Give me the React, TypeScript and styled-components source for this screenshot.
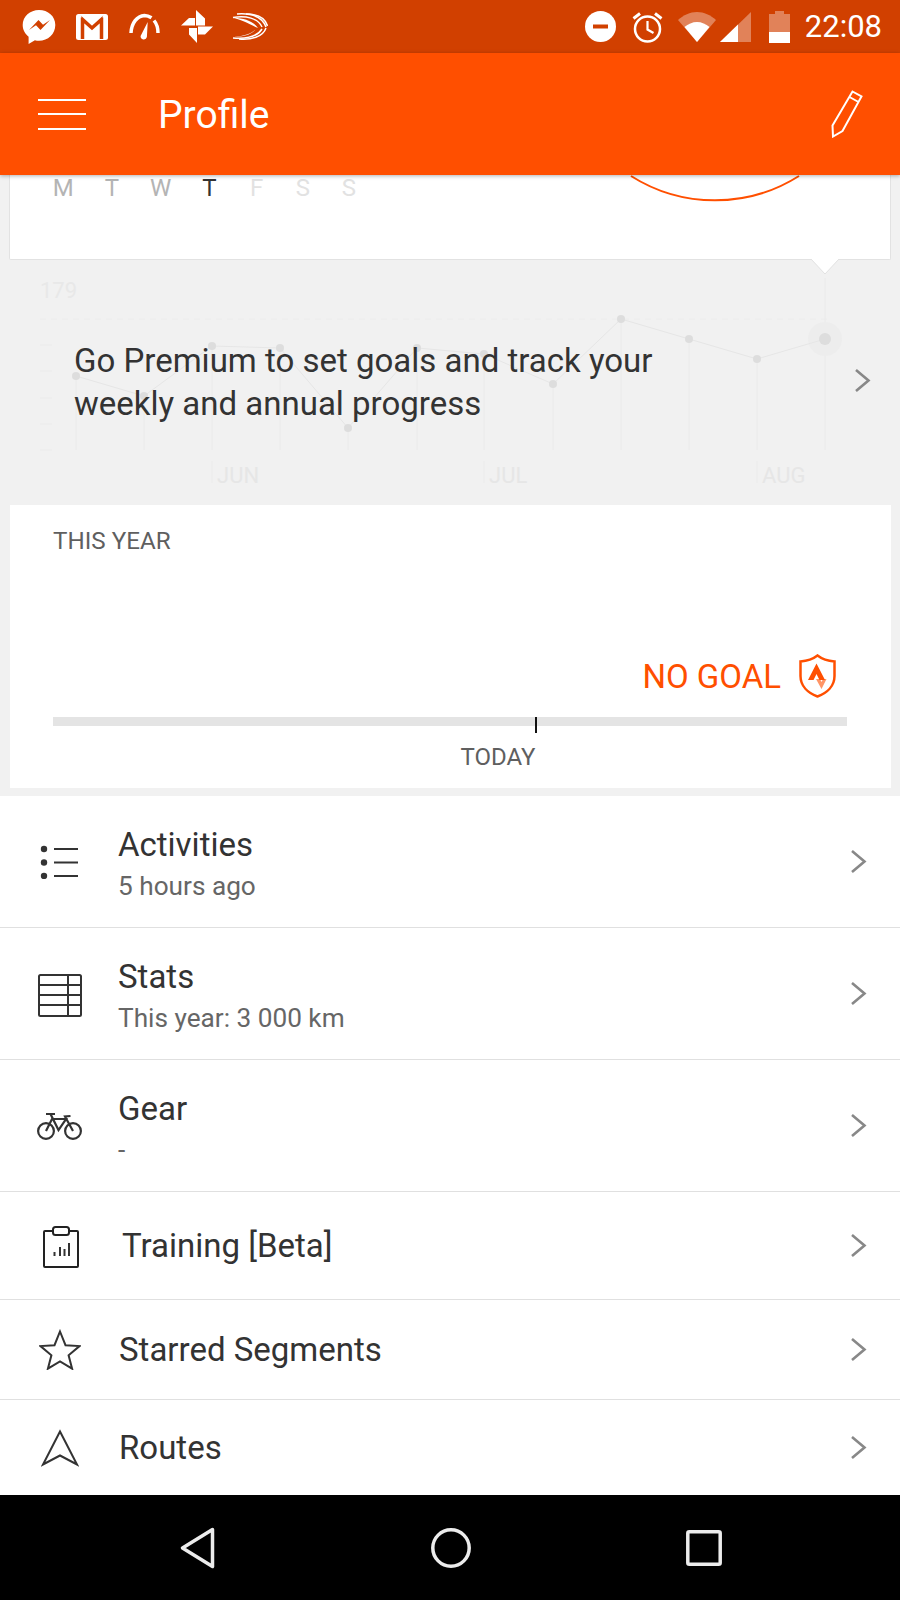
import React from 'react'
import styled, {createGlobalStyle} from 'styled-components'

const STATUS_BG = '#d14000'
const ORANGE = '#ff4f00'
const INK = '#333333'
const NAV_ICON = '#ececec'

const GlobalStyle = createGlobalStyle`
  html, body {
    margin: 0;
    padding: 0;
    background: #000;
  }
  * {
    box-sizing: border-box;
  }
`

const Screen = styled.div`
  width: 900px;
  height: 1600px;
  display: flex;
  flex-direction: column;
  overflow: hidden;
  font-family: Roboto, "Noto Sans", sans-serif;
  background: #f1f1f1;
`

/* status bar */
const StatusBar = styled.div`
  height: 53px;
  flex: none;
  display: flex;
  align-items: center;
  justify-content: space-between;
  padding: 0 18px 0 22px;
  background: ${STATUS_BG};
`
const StatusGroup = styled.div`
  display: flex;
  align-items: center;
`
const StatusIcon = styled.svg<{ $gap?: number }>`
  display: block;
  flex: none;
  margin-right: ${({$gap}) => $gap ?? 0}px;
`
const Clock = styled.span`
  color: #fff;
  font-size: 31px;
  line-height: 53px;
  margin-left: 15px;
`

/* toolbar */
const Toolbar = styled.header`
  height: 122px;
  flex: none;
  position: relative;
  z-index: 2;
  display: flex;
  align-items: center;
  padding: 0 37px 0 38px;
  background: ${ORANGE};
  box-shadow: 0 1px 4px rgba(0, 0, 0, 0.3);
`
const Burger = styled.div`
  width: 48px;
  height: 31px;
  display: flex;
  flex-direction: column;
  justify-content: space-between;
  span {
    display: block;
    height: 2px;
    background: #fff;
  }
`
const Title = styled.h1`
  margin: 2px 0 0 72px;
  flex: 1;
  color: #fff;
  font-size: 39px;
  font-weight: 400;
`

/* week card */
const WeekCard = styled.section`
  height: 85px;
  flex: none;
  position: relative;
  margin: 0 9px 0 9px;
  padding: 0 0 0 29px;
  display: flex;
  background: #fff;
  border: 1px solid #e2e2e2;
  border-top: 0;
  border-radius: 0 0 2px 2px;
`
const Day = styled.span<{ $tone: string }>`
  width: 48.7px;
  line-height: 27px;
  text-align: center;
  font-size: 24px;
  color: ${({$tone}) => $tone};
  &:nth-child(n + 5) {
    width: 46px;
  }
`
const ProgressArc = styled.svg`
  position: absolute;
  left: 620px;
  top: 0;
`
const Notch = styled.svg`
  position: absolute;
  left: 798px;
  bottom: -16px;
  z-index: 1;
`

/* premium teaser over the ghost chart */
const Promo = styled.section`
  height: 245px;
  flex: none;
  position: relative;
  display: flex;
  align-items: center;
  justify-content: space-between;
  padding: 0 29px 5px 74px;
`
const GhostChart = styled.svg`
  position: absolute;
  left: 0;
  top: 0;
`
const PromoText = styled.p`
  position: relative;
  margin: 4px 0 0;
  font-size: 33px;
  line-height: 43px;
  color: ${INK};
`
const Chevron = styled.svg`
  display: block;
  flex: none;
  position: relative;
`

/* this year card */
const YearCard = styled.section`
  height: 283px;
  flex: none;
  margin: 0 9px 0 10px;
  padding: 22px 44px 0 43px;
  display: flex;
  flex-direction: column;
  background: #fff;
`
const YearLabel = styled.div`
  font-size: 24.2px;
  line-height: 28px;
  color: #5f5f5f;
`
const GoalRow = styled.div`
  margin-top: 99px;
  height: 44px;
  display: flex;
  align-items: center;
  justify-content: flex-end;
  padding-right: 11px;
  gap: 18px;
  color: ${ORANGE};
  font-size: 33px;
`
const Track = styled.div`
  position: relative;
  height: 9px;
  margin-top: 19px;
  background: #e4e4e4;
`
const TodayTick = styled.div`
  position: absolute;
  top: 0;
  width: 2px;
  height: 16px;
  background: #111;
`
const TodayLabel = styled.div`
  margin-top: 16px;
  padding-left: 1px;
  margin-left: 1px;
  text-align: right;
  font-size: 24px;
  line-height: 30px;
  color: #5f5f5f;
`

/* list */
const List = styled.nav`
  flex: 1;
  margin-top: 8px;
  background: #fff;
`
const Row = styled.div<{ $height: number }>`
  height: ${({$height}) => $height}px;
  display: flex;
  align-items: center;
  padding-right: 33px;
  border-bottom: 1px solid #e0e0e0;
  &:last-child {
    border-bottom: 0;
  }
`
const IconCell = styled.div<{ $dx?: number, $dy?: number }>`
  width: 119px;
  flex: none;
  display: flex;
  justify-content: center;
  padding-left: ${({$dx}) => $dx ?? 0}px;
  padding-top: ${({$dy}) => $dy ?? 0}px;
  svg {
    display: block;
  }
`
const RowBody = styled.div<{ $indent?: number, $lift?: number }>`
  flex: 1;
  padding-left: ${({$indent}) => $indent ?? 0}px;
  padding-top: ${({$lift}) => $lift ?? 0}px;
`
const RowTitle = styled.div`
  font-size: 33px;
  line-height: 40px;
  margin-left: -1px;
  color: ${INK};
`
const RowSub = styled.div`
  margin-top: 2px;
  margin-left: -1px;
  font-size: 26.2px;
  line-height: 38px;
  color: #666;
`

/* android nav */
const NavBar = styled.footer`
  height: 105px;
  flex: none;
  display: flex;
  align-items: center;
  background: #000;
  padding: 0 178px 0 180px;
  justify-content: space-between;
`

const chartDots = [
  [76, 376], [144, 396], [212, 346], [280, 348], [348, 428], [417, 348],
  [484, 354], [553, 384], [621, 319], [689, 339], [757, 359], [825, 339],
]
const chartGrid = [345, 371, 398, 424, 450]
const chartMonths = [
  {label: 'JUN', x: 212},
  {label: 'JUL', x: 484},
  {label: 'AUG', x: 757},
]
const days = [
  {d: 'M', tone: '#b4b4b4'},
  {d: 'T', tone: '#b4b4b4'},
  {d: 'W', tone: '#b4b4b4'},
  {d: 'T', tone: '#333'},
  {d: 'F', tone: '#e2e2e2'},
  {d: 'S', tone: '#e2e2e2'},
  {d: 'S', tone: '#e2e2e2'},
]

const ListChevron = () => (
  <Chevron width="17" height="25" viewBox="0 0 17 25">
    <path d="M2 2l12.5 10.5L2 23" fill="none" stroke="#888" strokeWidth="2.6"/>
  </Chevron>
)

const ActivitiesIcon = () => (
  <svg width="40" height="34" viewBox="0 0 40 34">
    <g fill="#333">
      <circle cx="4" cy="4" r="3.2"/>
      <circle cx="4" cy="17.5" r="3.2"/>
      <circle cx="4" cy="31" r="3.2"/>
    </g>
    <path d="M14 4h24M14 17.5h24M14 31h24" stroke="#333" strokeWidth="2"/>
  </svg>
)
const StatsIcon = () => (
  <svg width="44" height="44" viewBox="0 0 44 44">
    <rect x="1" y="1" width="42" height="41" rx="1.5" fill="none" stroke="#333" strokeWidth="2"/>
    <path d="M1 11h42M1 21h42M1 31h42M30 1v41" stroke="#333" strokeWidth="2"/>
  </svg>
)
const GearIcon = () => (
  <svg width="45" height="28" viewBox="0 0 45 28">
    <g fill="none" stroke="#333" strokeWidth="2.2">
      <circle cx="9" cy="19" r="7.900"/>
      <circle cx="36" cy="19" r="7.900"/>
      <path d="M9 19L15 7h14L21.500 18 13.500 2M9 2h9M36 19L28 4.500l5.500-.5"/>
    </g>
  </svg>
)
const TrainingIcon = () => (
  <svg width="36" height="42" viewBox="0 0 36 42">
    <path d="M9 5H2a1 1 0 0 0-1 1v34a1 1 0 0 0 1 1h32a1 1 0 0 0 1-1V6a1 1 0 0 0-1-1h-7" fill="none" stroke="#222" strokeWidth="2"/>
    <rect x="10" y="1" width="16" height="8" rx="2.5" fill="none" stroke="#222" strokeWidth="2"/>
    <path d="M11.5 26v4M17 21v9M21.5 23v7M26 17v13" stroke="#333" strokeWidth="2"/>
  </svg>
)
const StarIcon = () => (
  <svg width="42" height="41" viewBox="0 0 42 41">
    <path d="M21 2.500l5.500 13.700 14 .9-10.900 9.200 3.500 13.400L21 32.400 8.900 39.700l3.500-13.400L1.500 17.100l14-.9z" fill="none" stroke="#333" strokeWidth="2"/>
  </svg>
)
const RouteIcon = () => (
  <svg width="38" height="38" viewBox="0 0 38 38">
    <path d="M19 2.500l17 33-17-9-17 9z" fill="none" stroke="#333" strokeWidth="2"/>
  </svg>
)

const rows = [
  {title: 'Activities', sub: '5 hours ago', height: 132, icon: <ActivitiesIcon/>, dx: 0},
  {title: 'Stats', sub: 'This year: 3 000 km', height: 132, icon: <StatsIcon/>, dy: 4, dx: 0},
  {title: 'Gear', sub: '-', height: 132, icon: <GearIcon/>, dx: 0},
  {title: 'Training [Beta]', height: 108, indent: 4, icon: <TrainingIcon/>, dx: 3, dy: 3},
  {title: 'Starred Segments', height: 100, indent: 1, icon: <StarIcon/>, dx: 1},
  {title: 'Routes', height: 95, indent: 1, icon: <RouteIcon/>, dx: 1},
]

export default function App() {
  const todayProgress = (534.5 - 53) / 794 * 100

  return (
    <Screen>
      <GlobalStyle/>
      <StatusBar>
        <StatusGroup>
          <StatusIcon $gap={20} width="34" height="36" viewBox="0 0 34 36">
            <path d="M17 1C8 1 .7 7.600.7 16c0 4.700 2.300 8.900 5.900 11.700V35l6.300-3.700c1.300.4 2.700.5 4.100.5 9 0 16.300-6.900 16.300-15.800S26 1 17 1z" fill="#fff"/>
            <path d="M7 21l9.500-10 4.500 4.800L28 11l-9.500 10-4.500-4.800z" fill={STATUS_BG}/>
          </StatusIcon>
          <StatusIcon $gap={21} width="32" height="26" viewBox="0 0 32 26">
            <rect width="32" height="26" rx="2.500" fill="#fff"/>
            <path d="M6.500 25V5.500L16 14l9.500-8.500V25" fill="none" stroke={STATUS_BG} strokeWidth="3.500"/>
            <path d="M2 2.500h3.500M26.500 2.500H30" stroke="#fff" strokeWidth="2"/>
          </StatusIcon>
          <StatusIcon $gap={21} width="31" height="28" viewBox="0 0 31 28">
            <path d="M2 20C2.500 10 8 3 15.500 2.500c3 0 5 1 7 2.300M25 7.500c2.500 3 4 7 4 12.500" fill="none" stroke="#fff" strokeWidth="3.500"/>
            <path d="M18.700 9l-.8 15a3.200 3.200 0 0 1-6.300-1z" fill="#fff"/>
          </StatusIcon>
          <StatusIcon $gap={19} width="32" height="33" viewBox="0 0 32 33">
            <path d="M15 15.500V0l9 8.500v7zM17 16.500h15L24 24.500h-7zM16 18v15l-8-8.500V18zM14 15.500H0L8 8h6z" fill="#fff"/>
          </StatusIcon>
          <StatusIcon width="36" height="27" viewBox="0 0 36 27">
            <g fill="none" stroke="#fff" strokeWidth="1.500">
              <path d="M1 4.500C14 2.500 26 5 30 14"/>
              <path d="M5 1c14-1 25 2 29 13"/>
              <path d="M14 1c10 0 19 3 21.500 12"/>
              <path d="M1 25c12 1 24-1 29-9"/>
              <path d="M7 26c12 1 24-2 27-11"/>
            </g>
            <path d="M2 5c10 0 19 3 24 10-5-2-11-6-24-10zM2 24c10-1 17-3 22-8-4 5-10 7.500-22 8z" fill="#fff"/>
          </StatusIcon>
        </StatusGroup>
        <StatusGroup>
          <StatusIcon $gap={16} width="31" height="31" viewBox="0 0 31 31">
            <circle cx="15.500" cy="15.500" r="15.500" fill="#fff"/>
            <rect x="8" y="13.500" width="15" height="4" fill={STATUS_BG}/>
          </StatusIcon>
          <StatusIcon $gap={15} width="31" height="32" viewBox="0 0 31 32">
            <g fill="none" stroke="#fff">
              <circle cx="15.500" cy="18" r="12.500" strokeWidth="2.500"/>
              <path d="M15.500 10v8.500l6 3.500" strokeWidth="2.200"/>
              <path d="M1.500 7.500L8 2.500M29.500 7.500L23 2.500" strokeWidth="3"/>
            </g>
          </StatusIcon>
          <StatusIcon $gap={4} width="38" height="30" viewBox="0 0 38 30">
            <path d="M19 30L0 8c5.500-5 12-8 19-8s13.500 3 19 8z" fill="#fff" fillOpacity="0.35"/>
            <path d="M19 30L6.500 15c3.500-3 8-5 12.500-5s9 2 12.500 5z" fill="#fff"/>
          </StatusIcon>
          <StatusIcon $gap={18} width="31" height="30" viewBox="0 0 31 30">
            <path d="M0 30L31 0v30z" fill="#fff" fillOpacity="0.35"/>
            <path d="M0 30l18-17.500V30z" fill="#fff"/>
          </StatusIcon>
          <StatusIcon width="21" height="32" viewBox="0 0 21 32">
            <path d="M6 0h9v3h6v29H0V3h6z" fill="#fff" fillOpacity="0.35"/>
            <rect y="21" width="21" height="11" fill="#fff"/>
          </StatusIcon>
          <Clock>22:08</Clock>
        </StatusGroup>
      </StatusBar>

      <Toolbar>
        <Burger><span/><span/><span/></Burger>
        <Title>Profile</Title>
        <svg width="32" height="48" viewBox="0 0 32 48">
          <path d="M21.500 1.500l9 5L11.500 41 2 46.500 1.500 35.500zM18.500 7l9 5" fill="none" stroke="#fff" strokeWidth="2"/>
        </svg>
      </Toolbar>

      <WeekCard>
        {days.map((day, i) => <Day key={i} $tone={day.tone}>{day.d}</Day>)}
        <ProgressArc width="170" height="27" viewBox="0 0 170 27">
          <path d="M1 1A157 157 0 0 0 169 1" fill="none" stroke={ORANGE} strokeWidth="2"/>
        </ProgressArc>
        <Notch width="34" height="16" viewBox="0 0 34 16">
          <path d="M3 0l14 15L31 0z" fill="#fff"/>
          <path d="M3 0l14 15L31 0" fill="none" stroke="#e2e2e2" strokeWidth="1"/>
          <path d="M4 -0.500H30" stroke="#fff"/>
        </Notch>
      </WeekCard>

      <Promo>
        <GhostChart width="900" height="245" viewBox="0 260 900 245">
          <text x="40" y="298" fontFamily="Roboto" fontSize="22" fill="#e8e8e8">179</text>
          <path d="M40 319H830" stroke="#ececec" strokeDasharray="6 5"/>
          {chartGrid.map(y => <path key={y} d={`M40 ${y}H52`} stroke="#ebebeb"/>)}
          {chartDots.map(([x, y]) => <path key={x} d={`M${x} ${y}V450`} stroke="#eaeaea"/>)}
          <path d="M825 278V339" stroke="#eaeaea"/>
          <circle cx="825" cy="339" r="17" fill="#ededed"/>
          <polyline points={chartDots.map(p => p.join(',')).join(' ')} fill="none" stroke="#e6e6e6" strokeWidth="1"/>
          {chartDots.map(([x, y], i) => (
            <circle key={x} cx={x} cy={y} r={i === chartDots.length - 1 ? 6 : 4} fill="#dddddd"/>
          ))}
          {chartMonths.map(m => (
            <g key={m.label}>
              <path d={`M${m.x} 461V483`} stroke="#ebebeb"/>
              <text x={m.x + 5} y="483" fontFamily="Roboto" fontSize="22" fill="#e6e6e6">{m.label}</text>
            </g>
          ))}
        </GhostChart>
        <PromoText>Go Premium to set goals and track your<br/>weekly and annual progress</PromoText>
        <ListChevron/>
      </Promo>

      <YearCard>
        <YearLabel>THIS YEAR</YearLabel>
        <GoalRow>
          NO GOAL
          <svg width="37" height="44" viewBox="0 0 37 44">
            <path d="M18.500 1.500c4.500 3.500 10.500 5.500 17 6V22c0 10-7.500 17-17 20.500C9 39 1.500 32 1.500 22V7.500c6.500-.5 12.500-2.500 17-6z" fill="none" stroke={ORANGE} strokeWidth="2.500"/>
            <path d="M17.500 9.500L9 26h5.500l3-6 3 6H26z" fill={ORANGE}/>
            <path d="M17 25h4l1.500 3 1.500-3h3.500l-5 10z" fill={ORANGE} fillOpacity="0.6"/>
          </svg>
        </GoalRow>
        <Track>
          <TodayTick style={{left: `${todayProgress}%`}}/>
        </Track>
        <TodayLabel style={{width: `${todayProgress}%`}}>TODAY</TodayLabel>
      </YearCard>

      <List>
        {rows.map(row => (
          <Row key={row.title} $height={row.height}>
            <IconCell $dx={row.dx} $dy={row.dy}>{row.icon}</IconCell>
            <RowBody $indent={row.indent} $lift={row.sub ? 7 : 0}>
              <RowTitle>{row.title}</RowTitle>
              {row.sub && <RowSub>{row.sub}</RowSub>}
            </RowBody>
            <ListChevron/>
          </Row>
        ))}
      </List>

      <NavBar>
        <svg width="36" height="42" viewBox="0 0 36 42">
          <path d="M32.500 2.500L2.500 21l30 18.500z" fill="none" stroke={NAV_ICON} strokeWidth="3.500" strokeLinejoin="round"/>
        </svg>
        <svg width="40" height="40" viewBox="0 0 40 40">
          <circle cx="20" cy="20" r="18.200" fill="none" stroke={NAV_ICON} strokeWidth="3.500"/>
        </svg>
        <svg width="36" height="36" viewBox="0 0 36 36">
          <rect x="1.800" y="1.800" width="32.400" height="32.400" rx="1.500" fill="none" stroke={NAV_ICON} strokeWidth="3.500"/>
        </svg>
      </NavBar>
    </Screen>
  )
}
